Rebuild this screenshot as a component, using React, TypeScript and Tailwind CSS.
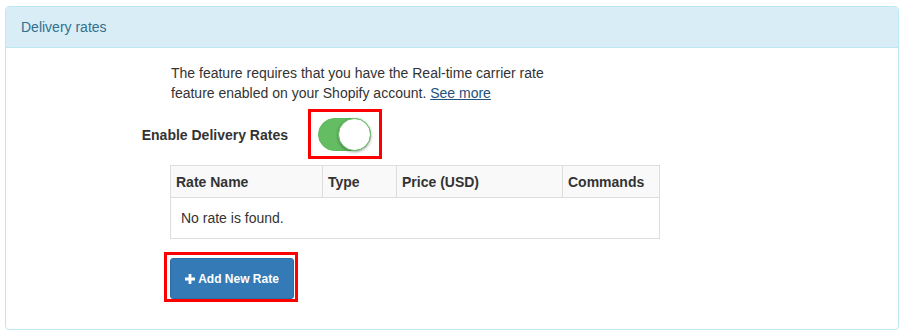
import React from 'react';

export default function App() {
  return (
    <div className="pt-[6px] pl-[5px] font-['Liberation_Sans',Arial,sans-serif] text-[14px] text-[#333]">
      <div className="w-[894px] h-[324px] border border-[#bce8f1] rounded-[4px] bg-white overflow-hidden">
        {/* panel heading */}
        <div className="h-[41px] bg-[#d9edf7] border-b border-[#bce8f1] px-[15px] flex items-center text-[#31708f]">
          Delivery rates
        </div>

        <div className="pt-[15px]">
          <p className="ml-[165px] w-[390px] leading-[20px]">
            The feature requires that you have the Real-time carrier rate feature enabled on your Shopify account.{' '}
            <a href="#" className="text-[#23527c] underline">See more</a>
          </p>

          {/* toggle row */}
          <div className="flex items-center mt-[6px]">
            <label className="w-[282px] text-right font-bold pt-[3px]">Enable Delivery Rates</label>
            <div className="ml-[20px] border-[3px] border-[#ff0000] pl-[7px] pr-[8px] pt-[6px] pb-[5px]">
              <div className="relative w-[53px] h-[33px] rounded-full bg-[#64bd63] border border-[#5cb85c]">
                <div className="absolute right-[-1px] top-[-1px] w-[33px] h-[33px] rounded-full bg-white border border-[#64bd63] shadow-[0_1px_3px_rgba(0,0,0,0.35)]" />
              </div>
            </div>
          </div>

          {/* rates table */}
          <table className="ml-[164px] mt-[6px] w-[490px] border-collapse border border-[#ddd] leading-[20px]">
            <thead>
              <tr className="bg-[#f9f9f9] h-[32px]">
                <th className="w-[152px] border border-[#ddd] px-[5px] text-left font-bold">Rate Name</th>
                <th className="w-[74px] border border-[#ddd] px-[5px] text-left font-bold">Type</th>
                <th className="w-[166px] border border-[#ddd] px-[5px] text-left font-bold">Price (USD)</th>
                <th className="border border-[#ddd] px-[5px] text-left font-bold">Commands</th>
              </tr>
            </thead>
            <tbody>
              <tr className="h-[41px]">
                <td colSpan={4} className="border border-[#ddd] px-[10px]">No rate is found.</td>
              </tr>
            </tbody>
          </table>

          {/* add button */}
          <div className="ml-[158px] mt-[13px] w-fit border-[3px] border-[#ff0000] pl-[3px] pr-[1px] pt-[3px] pb-[0px]">
            <button className="w-[124px] h-[41px] flex items-center justify-center gap-[3px] bg-[#337ab7] border border-[#2e6da4] rounded-[3px] text-white text-[12px] font-bold">
              <svg width="10" height="10" viewBox="0 0 10 10" fill="white">
                <path d="M3.6 0h2.8v3.6H10v2.8H6.4V10H3.6V6.4H0V3.6h3.6z" />
              </svg>
              Add New Rate
            </button>
          </div>
        </div>
      </div>
    </div>
  );
}
